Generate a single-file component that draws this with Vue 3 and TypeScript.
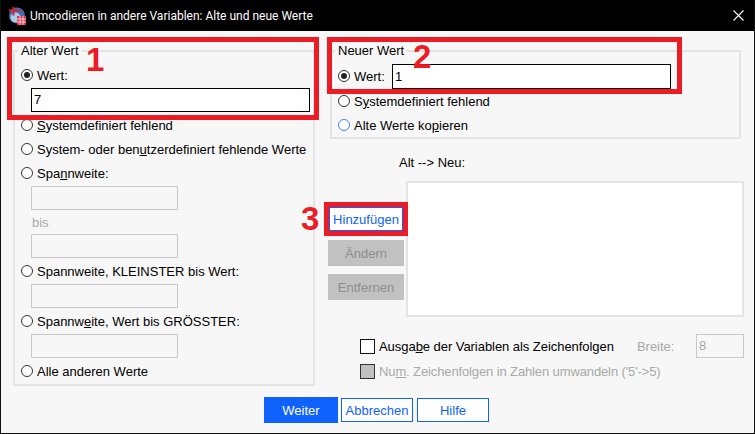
<script setup lang="ts">
interface Mark { cls: string; n?: string }
const boxes: Mark[] = [
  { cls: 'box-1' }, { cls: 'box-2' }, { cls: 'box-3' },
]
const digits: Mark[] = [
  { cls: 'digit-1', n: '1' }, { cls: 'digit-2', n: '2' }, { cls: 'digit-3', n: '3' },
]
</script>

<template>
  <div class="window">
    <header class="titlebar">
      <svg class="app-icon" width="18" height="18" viewBox="0 0 18 18">
        <circle cx="8" cy="8.5" r="8" fill="#3a6fae" />
        <circle cx="6.5" cy="10.5" r="5" fill="#a9cbe8" />
        <path d="M0 3.5h12M4.5 0v8.5" stroke="#d8203a" stroke-width="2" />
        <rect x="8" y="9" width="9" height="9" fill="#d8344f" />
        <path d="M8 12h9M8 15h9M11 9v9M14 9v9" stroke="#f9ccd4" stroke-width="1" />
      </svg>
      <span class="title">Umcodieren in andere Variablen: Alte und neue Werte</span>
      <svg class="close" width="11" height="11" viewBox="0 0 11 11">
        <path d="M.5.5l10 10M10.5.5l-10 10" stroke="#fff" stroke-width="1.1" fill="none" />
      </svg>
    </header>

    <main class="main">
      <section class="group old">
        <span class="legend">Alter Wert</span>
        <label class="row"><i class="radio on"></i>Wert:</label>
        <div class="field wide active">7</div>
        <label class="row"><i class="radio"></i><span><u>S</u>ystemdefiniert fehlend</span></label>
        <label class="row"><i class="radio"></i><span>System- oder ben<u>u</u>tzerdefiniert fehlende Werte</span></label>
        <label class="row"><i class="radio"></i><span>Spa<u>n</u>nweite:</span></label>
        <div class="field before-bis"></div>
        <div class="row bis">bis</div>
        <div class="field after-bis"></div>
        <label class="row"><i class="radio"></i>Spannweite, KLEINSTER bis Wert:</label>
        <div class="field"></div>
        <label class="row"><i class="radio"></i><span>Spannw<u>e</u>ite, Wert bis GRÖSSTER:</span></label>
        <div class="field"></div>
        <label class="row"><i class="radio"></i>Alle anderen Werte</label>
      </section>

      <div class="right">
        <section class="group new">
          <span class="legend">Neuer Wert</span>
          <div class="row value-row">
            <label class="inline"><i class="radio on"></i>Wert:</label>
            <div class="field active new-field">1</div>
          </div>
          <label class="row"><i class="radio"></i><span>S<u>y</u>stemdefiniert fehlend</span></label>
          <label class="row"><i class="radio blue"></i><span>Alte Werte ko<u>p</u>ieren</span></label>
        </section>

        <div class="changes-label">Alt --&gt; Neu:</div>

        <div class="transfer">
          <div class="actions">
            <button class="btn add">Hinzufügen</button>
            <button class="btn off">Ändern</button>
            <button class="btn off">Entfernen</button>
          </div>
          <div class="list"></div>
        </div>

        <div class="options">
          <div class="opt-row">
            <i class="check"></i>
            <span class="opt-text first">Ausga<u>b</u>e der Variablen als Zeichenfolgen</span>
            <span class="width-label">Breite:</span>
            <div class="field width-field">8</div>
          </div>
          <div class="opt-row muted">
            <i class="check grey"></i>
            <span class="opt-text second">Nu<u>m</u>. Zeichenfolgen in Zahlen umwandeln ('5'-&gt;5)</span>
          </div>
        </div>
      </div>
    </main>

    <footer class="footer">
      <button class="btn primary">Weiter</button>
      <button class="btn outline">Abbrechen</button>
      <button class="btn outline">Hilfe</button>
    </footer>

    <div v-for="b in boxes" :key="b.cls" class="red-box" :class="b.cls"></div>
    <div v-for="d in digits" :key="d.cls" class="digit" :class="d.cls">{{ d.n }}</div>
  </div>
</template>

<style>
html, body { margin: 0; background: #f7f7f7; }
</style>

<style scoped>
.window {
  position: relative;
  width: 755px;
  height: 434px;
  box-sizing: border-box;
  display: flex;
  flex-direction: column;
  background: #f7f7f7;
  border-left: 1px solid #111;
  border-right: 1px solid #111;
  border-bottom: 1px solid #111;
  font: 13px "Liberation Sans", Arial, sans-serif;
  color: #000;
  overflow: hidden;
}
.titlebar {
  height: 31px;
  flex: none;
  background: #000;
  color: #fff;
  display: flex;
  align-items: center;
  padding: 0 10px 0 8px;
}
.app-icon { flex: none; margin-top: 1px; }
.title {
  margin-left: 3px;
  font: 12px Roboto, "Noto Sans", sans-serif;
  flex: 1;
}
.main {
  display: flex;
  padding: 19px 9px 0 12px;
  height: 335px;
  box-sizing: border-box;
  flex: none;
}
.group {
  position: relative;
  box-sizing: border-box;
  border: 2px solid #e4e4e4;
  flex: none;
}
.legend {
  position: absolute;
  top: -9px;
  left: 3px;
  padding: 0 3px;
  line-height: 16px;
  background: #f7f7f7;
}
.old {
  width: 302px;
  height: 336px;
  padding-top: 11px;
}
.row {
  height: 24px;
  display: flex;
  align-items: center;
  padding-left: 6px;
  white-space: nowrap;
}
.radio {
  width: 12px;
  height: 12px;
  box-sizing: border-box;
  border: 1px solid #333;
  border-radius: 50%;
  margin-right: 4px;
  flex: none;
  display: flex;
  align-items: center;
  justify-content: center;
  background: #fff;
}
.radio.on::after {
  content: "";
  width: 6px;
  height: 6px;
  border-radius: 50%;
  background: #222;
}
.radio.blue { border-color: #3f82f5; }
.field {
  box-sizing: border-box;
  width: 147px;
  height: 24px;
  margin: 1px 0 1px 16px;
  border: 1px solid #c8c8c8;
  background: #f7f7f7;
  line-height: 22px;
  padding-left: 2px;
}
.field.before-bis { margin-bottom: 0; }
.field.after-bis { margin-top: 0; }
.field.wide { width: 279px; }
.field.active { border-color: #000; background: #fff; }
.bis { color: #a8a8a8; padding-left: 16px; margin-left: 1px; }
.right {
  margin-left: 13px;
  display: flex;
  flex-direction: column;
  flex: none;
  width: 416px;
}
.new {
  width: 411px;
  height: 89px;
  margin-left: 2px;
  padding-top: 11px;
}
.value-row { height: 26px; }
.inline { display: flex; align-items: center; width: 54px; flex: none; }
.new-field {
  width: 279px;
  height: 25px;
  margin: 0;
  line-height: 23px;
}
.changes-label {
  margin: 16px 0 0 71px;
  height: 16px;
  line-height: 16px;
  flex: none;
}
.transfer {
  display: flex;
  margin-top: 10px;
  flex: none;
}
.actions {
  width: 76px;
  margin-right: 2px;
  flex: none;
  display: flex;
  flex-direction: column;
  padding-top: 26px;
}
.btn {
  box-sizing: border-box;
  font: inherit;
  padding: 0;
  border: 0;
}
.actions .btn { height: 26px; margin-bottom: 8px; width: 76px; flex: none; }
.actions .add {
  width: 74px;
  height: 24px;
  margin: 0 1px 9px;
  background: #fff;
  border: 1px solid #0f62fe;
  color: #0f62fe;
}
.off { background: #c1c1c1; color: #8d8d8d; }
.list {
  width: 338px;
  height: 136px;
  box-sizing: border-box;
  background: #fff;
  border: 2px solid #e4e4e4;
}
.options {
  margin-top: 17px;
  padding-left: 32px;
  flex: none;
}
.opt-row {
  height: 24px;
  display: flex;
  align-items: center;
}
.muted { margin-top: 1px; color: #a8a8a8; }
.check {
  width: 15px;
  height: 15px;
  box-sizing: border-box;
  border: 1px solid #111;
  background: #fff;
  margin-right: 4px;
  flex: none;
}
.check.grey { background: #c1c1c1; border-color: #333; }
.opt-text { white-space: nowrap; }
.opt-text.first { letter-spacing: -0.05px; }
.opt-text.second { letter-spacing: -0.12px; }
.width-label { margin-left: 23px; color: #a8a8a8; }
.width-field {
  width: 48px;
  margin: 0 0 0 auto;
  color: #a8a8a8;
  flex: none;
}
.footer {
  display: flex;
  align-items: center;
  padding-left: 263px;
  margin-top: 31px;
  height: 26px;
  flex: none;
}
.footer .primary {
  width: 74px;
  height: 26px;
  background: #0f62fe;
  color: #fff;
}
.footer .outline {
  width: 72px;
  height: 24px;
  margin-left: 3px;
  background: #fff;
  border: 1px solid #0f62fe;
  color: #0f62fe;
}
.footer .outline:last-child { margin-left: 4px; }
.red-box {
  position: absolute;
  box-sizing: border-box;
  border: 5px solid #ed1c24;
  pointer-events: none;
}
.box-1 { left: 6px; top: 37px; width: 312px; height: 83px; }
.box-2 { left: 326px; top: 37px; width: 355px; height: 57px; }
.box-3 { left: 323px; top: 202px; width: 84px; height: 34px; }
.digit {
  position: absolute;
  color: #ed1c24;
  font: bold 33px/33px "Liberation Sans", Arial, sans-serif;
}
.digit-1 { left: 85px; top: 43px; }
.digit-2 { left: 412px; top: 40px; }
.digit-3 { left: 300px; top: 202px; }
</style>
